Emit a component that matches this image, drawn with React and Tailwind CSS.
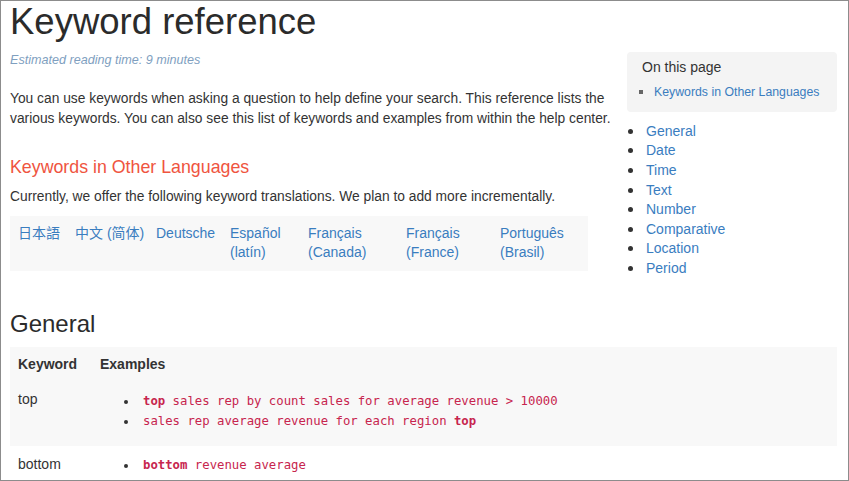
import React from "react";

const langs = [
  { w: "w-[57px]", l: ["日本語"] },
  { w: "w-[81px]", l: ["中文 (简体)"] },
  { w: "w-[74px]", l: ["Deutsche"] },
  { w: "w-[78px]", l: ["Español", "(latín)"] },
  { w: "w-[98px]", l: ["Français", "(Canada)"] },
  { w: "w-[94px]", l: ["Français", "(France)"] },
  { w: "w-[96px]", l: ["Português", "(Brasil)"] },
];

const toc = ["General", "Date", "Time", "Text", "Number", "Comparative", "Location", "Period"];

function CodeItem({ children }) {
  return (
    <li className="flex items-center h-[20px]">
      <span className="w-[4px] h-[4px] rounded-full bg-[#333] ml-[32px] mr-[15px] shrink-0" />
      <code className="font-['DejaVu_Sans_Mono',Menlo,monospace] text-[12.3px] text-[#c7254e] whitespace-pre">
        {children}
      </code>
    </li>
  );
}

export default function App() {
  return (
    <div className="w-[849px] h-[481px] overflow-hidden border border-[#8c8c8c] bg-white font-['Liberation_Sans',Arial,'Noto_Sans_CJK_SC',sans-serif] text-[#333]">
      <div className="pl-[9px] pr-[10px]">
        <h1 className="text-[36.5px] leading-[40px] mt-px text-[#2b2b2b]">Keyword reference</h1>
        <div className="flex">
          <div className="w-[612px] shrink-0">
            <p className="mt-[10px] text-[12.6px] leading-[17px] italic text-[#7f9fbf]">
              Estimated reading time: 9 minutes
            </p>
            <p className="mt-[20px] text-[13.8px] leading-[19.5px]">
              You can use keywords when asking a question to help define your search. This reference lists the
              various keywords. You can also see this list of keywords and examples from within the help center.
            </p>
            <h3 className="mt-[29px] text-[17.8px] leading-[20px] text-[#ef5440]">Keywords in Other Languages</h3>
            <p className="mt-[10px] text-[13.8px] leading-[19.6px]">
              Currently, we offer the following keyword translations. We plan to add more incrementally.
            </p>
            <div className="mt-[9px] flex w-[578px] bg-[#f8f8f8] py-[8px]">
              {langs.map((c, i) => (
                <div key={i} className={`${c.w} px-[8px] shrink-0 text-[14px] leading-[19.6px] text-[#3a7dbf]`}>
                  {c.l.map((t, j) => (
                    <div key={j} className="whitespace-nowrap">{t}</div>
                  ))}
                </div>
              ))}
            </div>
          </div>
          <div className="ml-[5px] mt-[10px] w-[210px] shrink-0">
            <div className="bg-[#f4f4f4] rounded-[4px] pt-[5px] pb-[11px]">
              <div className="pl-[15px] text-[14px] leading-[20px] text-[#333]">On this page</div>
              <div className="mt-[6px] flex items-center h-[17.5px] pl-[12px]">
                <span className="w-[4px] h-[4px] bg-[#666] mr-[11px] shrink-0" />
                <span className="text-[12.3px] text-[#3a7dbf] whitespace-nowrap">Keywords in Other Languages</span>
              </div>
            </div>
            <ul className="mt-[10px]">
              {toc.map((t) => (
                <li key={t} className="flex items-center h-[19.6px]">
                  <span className="w-[5px] h-[5px] rounded-full bg-[#333] ml-[1px] mr-[13px] shrink-0" />
                  <span className="text-[14px] text-[#3a7dbf]">{t}</span>
                </li>
              ))}
            </ul>
          </div>
        </div>
        <h2 className="mt-[33px] text-[24px] leading-[26px] text-[#2b2b2b]">General</h2>
        <div className="mt-[10px] w-[827px] text-[14px] leading-[19.6px]">
          <div className="bg-[#f8f8f8]">
            <div className="flex py-[8px] font-bold">
              <div className="w-[82px] px-[8px]">Keyword</div>
              <div className="px-[8px]">Examples</div>
            </div>
            <div className="flex pt-[7px] pb-[14px]">
              <div className="w-[82px] px-[8px]">top</div>
              <ul className="mt-[2px]">
                <CodeItem>
                  <b>top</b> sales rep by count sales for average revenue &gt; 10000
                </CodeItem>
                <CodeItem>
                  sales rep average revenue for each region <b>top</b>
                </CodeItem>
              </ul>
            </div>
          </div>
          <div className="flex pt-[9px] pb-[16px]">
            <div className="w-[82px] px-[8px]">bottom</div>
            <ul className="mt-[1px]">
              <CodeItem>
                <b>bottom</b> revenue average
              </CodeItem>
              <CodeItem>
                bottom revenue by state
              </CodeItem>
            </ul>
          </div>
        </div>
      </div>
    </div>
  );
}
